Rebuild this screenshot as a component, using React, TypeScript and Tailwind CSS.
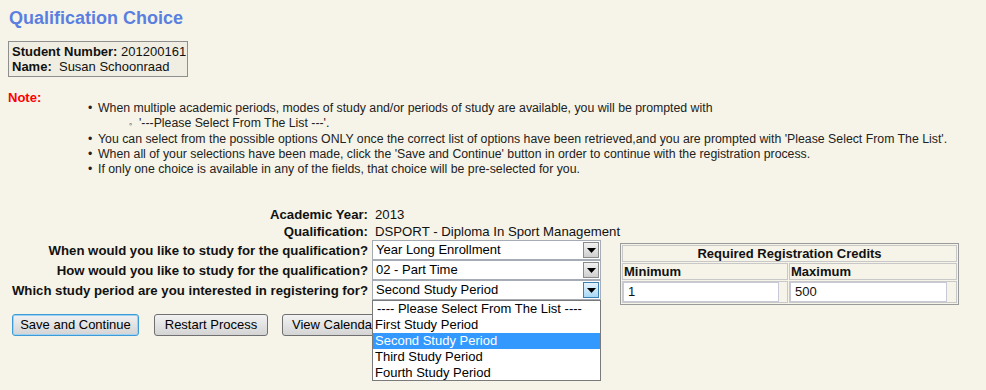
import { useState } from "react"

const notes = [
  "When multiple academic periods, modes of study and/or periods of study are available, you will be prompted with",
  "You can select from the possible options ONLY once the correct list of options have been retrieved,and you are prompted with 'Please Select From The List'.",
  "When all of your selections have been made, click the 'Save and Continue' button in order to continue with the registration process.",
  "If only one choice is available in any of the fields, that choice will be pre-selected for you.",
]

const periods = [
  "---- Please Select From The List ----",
  "First Study Period",
  "Second Study Period",
  "Third Study Period",
  "Fourth Study Period",
]

function FakeSelect({ value, active }: { value: string; active?: boolean }) {
  return (
    <div className="flex h-[20px] w-[229px] items-stretch border border-[#a5acb5] bg-white">
      <span className="flex-1 pl-[3px] text-[13px] leading-[18px] text-black">{value}</span>
      <span
        className={
          "m-px flex w-[16px] items-center justify-center border " +
          (active
            ? "border-[#3c7fb1] bg-gradient-to-b from-[#e5f4fc] to-[#a7d9f5]"
            : "border-[#8a8a8a] bg-gradient-to-b from-[#f2f2f2] to-[#cfcfcf]")
        }
      >
        <svg width="9" height="5" viewBox="0 0 9 5">
          <path d="M0 0h9L4.5 5z" fill="#000" />
        </svg>
      </span>
    </div>
  )
}

function Button({ label, focused, className }: { label: string; focused?: boolean; className?: string }) {
  return (
    <button
      className={
        "h-[22px] rounded-[3px] border bg-gradient-to-b from-[#f2f2f2] to-[#d4d4d4] text-[13px] leading-[18px] text-black " +
        (focused ? "border-[#3c9ad6] shadow-[inset_0_0_0_1px_#9fd2f2] " : "border-[#707070] ") +
        (className ?? "")
      }
    >
      {label}
    </button>
  )
}

export default function App() {
  const [selected] = useState(2)
  return (
    <div className="h-[390px] w-[986px] overflow-hidden bg-[#f6f4e8] font-['Liberation_Sans',Arial,sans-serif] text-[#111]">
      <h1 className="ml-[9px] pt-[6px] text-[18px] font-bold leading-[24px] text-[#5b7fe0]">
        Qualification Choice
      </h1>

      <div className="ml-[8px] mt-[11px] inline-block whitespace-nowrap border border-[#8f8f8f] bg-[#f0eee2] py-[2px] pl-[3px] pr-[1px] text-[13px] leading-[15px]">
        <div>
          <b>Student Number:</b> 201200161
        </div>
        <div>
          <b>Name:</b>&nbsp; Susan Schoonraad
        </div>
      </div>

      <div className="ml-[8px] mt-[12px] text-[13px] font-bold leading-[16px] text-[#ff0000]">Note:</div>
      <ul className="-mt-[5px] ml-[98px] text-[12.3px] leading-[15.3px] text-[#222]">
        {notes.map((n, i) => (
          <li key={i} className="relative">
            <span className="absolute -left-[10px]">•</span>
            {n}
            {i === 0 && (
              <div className="relative ml-[41px]">
                <span className="absolute -left-[10px] top-[1px] text-[9px]">◦</span>
                '---Please Select From The List ---'.
              </div>
            )}
          </li>
        ))}
      </ul>

      <div className="mt-[29px] flex items-start">
        <div className="grid grid-cols-[368px_229px] gap-x-[4px] text-[13.2px] leading-[17px]">
          <div className="text-right font-bold">Academic Year:</div>
          <div className="pl-[3px]">2013</div>
          <div className="text-right font-bold">Qualification:</div>
          <div className="whitespace-nowrap pl-[3px]">DSPORT - Diploma In Sport Management</div>

          <div className="flex h-[20px] items-center justify-end whitespace-nowrap font-bold">When would you like to study for the qualification?</div>
          <FakeSelect value="Year Long Enrollment" />
          <div className="flex h-[20px] items-center justify-end whitespace-nowrap font-bold">How would you like to study for the qualification?</div>
          <FakeSelect value="02 - Part Time" />
          <div className="flex h-[20px] items-center justify-end whitespace-nowrap font-bold">Which study period are you interested in registering for?</div>
          <div className="relative">
            <FakeSelect value="Second Study Period" active />
            <div className="absolute left-0 top-[20px] z-10 w-[229px] border border-[#7a7a7a] bg-white text-[13px] leading-[15.8px]">
              {periods.map((p, i) => (
                <div
                  key={p}
                  className={
                    "pl-[2px] " +
                    (i === selected ? "bg-[#3399ff] text-white" : "text-black") +
                    (i === 0 ? " pl-[4px]" : "")
                  }
                >
                  {p}
                </div>
              ))}
            </div>
          </div>
        </div>

        <table className="ml-[19px] mt-[37px] w-[339px] border-separate border-spacing-[1px] border border-[#9a9a9a] text-[13px] leading-[15px]">
          <tbody>
            <tr>
              <th colSpan={2} className="border border-[#c8c8c8] py-[0px] text-center font-bold">
                Required Registration Credits
              </th>
            </tr>
            <tr>
              <th className="w-[166px] border border-[#c8c8c8] pl-[1px] text-left font-bold">Minimum</th>
              <th className="border border-[#c8c8c8] pl-[1px] text-left font-bold">Maximum</th>
            </tr>
            <tr>
              <td className="border border-[#c8c8c8] p-0">
                <div className="h-[20px] w-[156px] border border-[#c8c8d8] bg-white pl-[4px] text-[13px] leading-[18px]">1</div>
              </td>
              <td className="border border-[#c8c8c8] p-0">
                <div className="h-[20px] w-[157px] border border-[#c8c8d8] bg-white pl-[4px] text-[13px] leading-[18px]">500</div>
              </td>
            </tr>
          </tbody>
        </table>
      </div>

      <div className="ml-[12px] mt-[9px] flex">
        <Button label="Save and Continue" focused className="w-[127px]" />
        <Button label="Restart Process" className="ml-[15px] w-[114px]" />
        <Button label="View Calendar" className="ml-[14px] whitespace-nowrap px-[9px]" />
      </div>
    </div>
  )
}
